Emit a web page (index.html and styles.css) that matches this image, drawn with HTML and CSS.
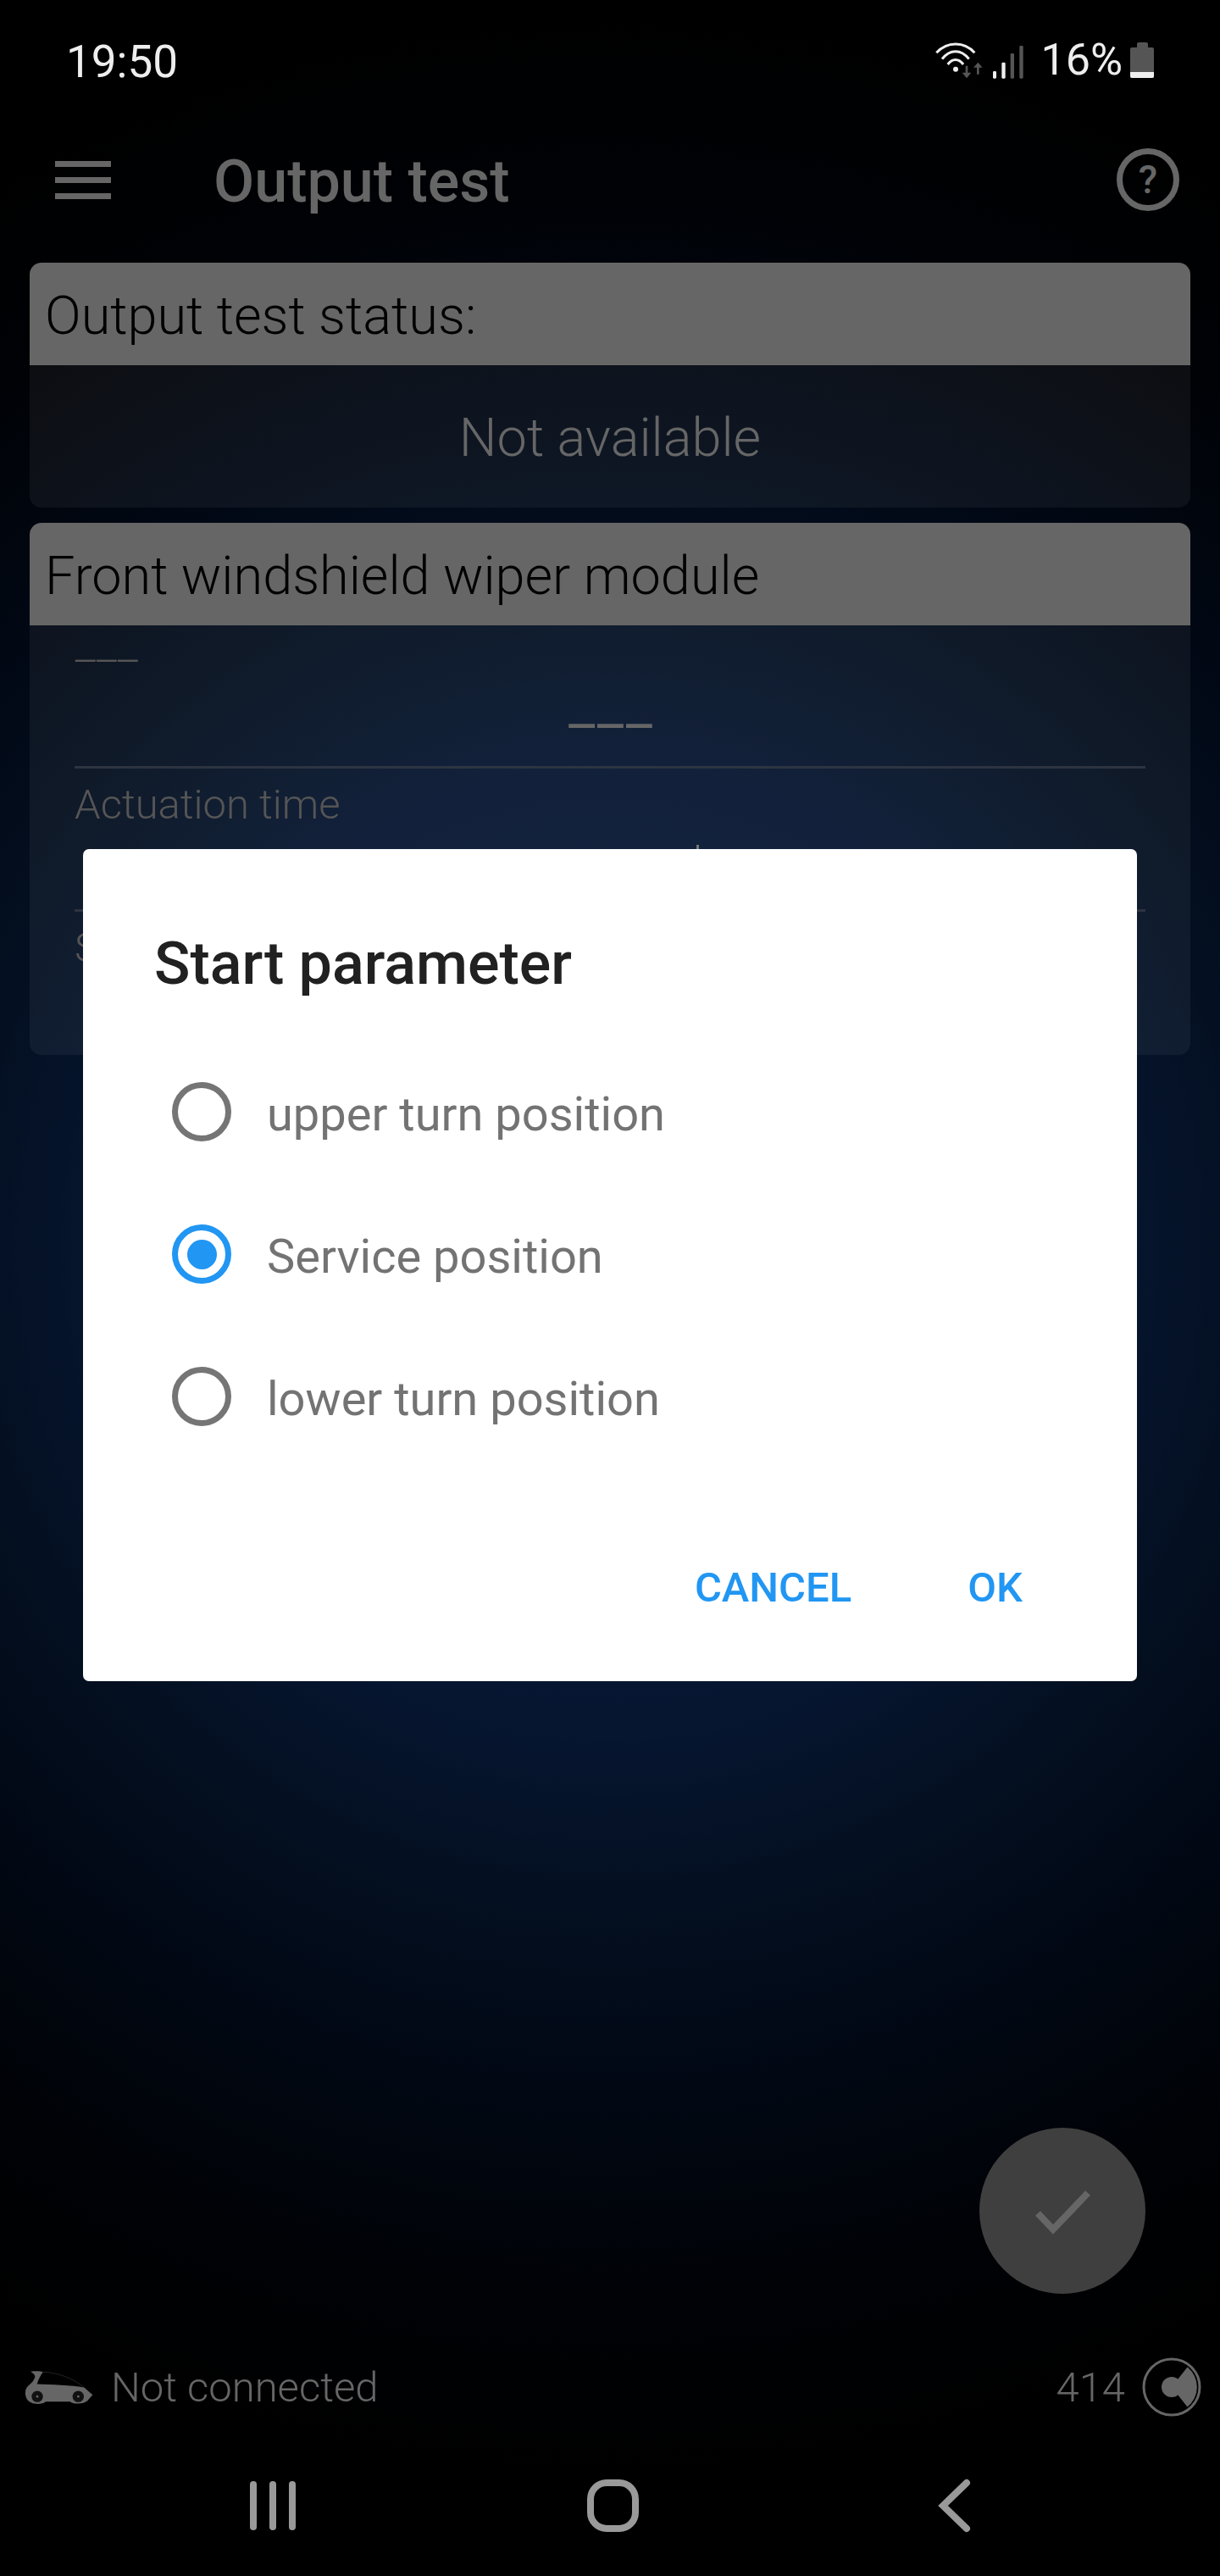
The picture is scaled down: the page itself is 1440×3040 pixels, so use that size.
FILE: index.html
```html
<!DOCTYPE html>
<html lang="en">
<head>
<meta charset="UTF-8" />
<meta name="viewport" content="width=device-width, initial-scale=1" />
<title>Output test</title>
<link rel="stylesheet" href="styles.css">
</head>
<body>
  <div class="screen">
    <div class="status-bar">
      <span class="clock">19:50</span>
      <div class="status-icons">
        <svg class="net-icon" viewBox="40 50 330 135">
          <g fill="none" stroke="#eee" stroke-width="9" stroke-linecap="butt">
            <path d="M50 90C88 49 148 49 185 90" />
            <path d="M70 112C97 76 138 76 165 112" />
            <path d="M90 131C106 109 129 109 145 131" />
          </g>
          <circle cx="118" cy="148" r="9" fill="#eee" />
          <g fill="#555">
            <path d="M153 136h8v24h12l-16 20-16-20h12z" />
            <path d="M193 166h8v-24h12l-16-18-16 18h12z" />
          </g>
          <rect x="250" y="155" width="12" height="26" rx="4" fill="#eee" />
          <rect x="281" y="124" width="13" height="57" rx="4" fill="#eee" />
          <rect x="312" y="92" width="13" height="89" rx="4" fill="#555" />
          <rect x="344" y="65" width="13" height="116" rx="4" fill="#555" />
        </svg>
        <span class="battery-text">16%</span>
        <div class="battery">
          <div class="battery-cap"></div>
          <div class="battery-body"><div class="battery-level"></div></div>
        </div>
      </div>
    </div>

    <div class="toolbar">
      <div class="menu-icon"><span></span><span></span><span></span></div>
      <h1 class="page-title">Output test</h1>
      <svg class="help-icon" viewBox="0 0 74 74">
        <circle cx="37" cy="37" r="33.5" fill="none" stroke="#666" stroke-width="7" />
        <text x="37" y="53" text-anchor="middle" class="help-mark">?</text>
      </svg>
    </div>

    <section class="card">
      <div class="card-header">Output test status:</div>
      <div class="card-body status-value">Not available</div>
    </section>

    <section class="card">
      <div class="card-header">Front windshield wiper module</div>
      <div class="card-body">
        <div class="field">
          <div class="field-label field-dashes">–––</div>
          <div class="field-value">–––</div>
        </div>
        <div class="field">
          <div class="field-label">Actuation time</div>
          <div class="field-value"><span class="value-tick"></span></div>
        </div>
        <div class="field">
          <div class="field-label">S</div>
        </div>
      </div>
    </section>

    <div class="bottom-status">
      <div class="connection">
        <svg class="car-icon" viewBox="85 165 243 122">
          <path fill="#666" d="M106 170C122 168 140 168 150 171C142 182 134 198 129 214C180 216 250 218 296 226L326 252L310 270C302 284 258 288 246 276H160C146 288 106 288 94 268C84 250 86 232 98 220C110 210 120 200 122 186C120 178 112 174 106 170Z" />
          <path d="M150 171C200 172 260 195 296 226" fill="none" stroke="#333" stroke-width="2" />
          <circle cx="130" cy="258" r="20" fill="#111" />
          <circle cx="275" cy="258" r="20" fill="#111" />
          <circle cx="130" cy="258" r="4" fill="#666" />
          <circle cx="275" cy="258" r="4" fill="#666" />
        </svg>
        <span class="bottom-text">Not connected</span>
      </div>
      <div class="counter">
        <span class="bottom-text">414</span>
        <svg class="credit-icon" viewBox="0 0 70 70">
          <circle cx="35" cy="35" r="33" fill="none" stroke="#666" stroke-width="3" />
          <path fill="#666" d="M35 35L53.5 11.5A30 30 0 0 1 53.5 58.500Z" />
          <circle cx="35" cy="35" r="12" fill="#666" />
        </svg>
      </div>
    </div>

    <div class="nav-bar">
      <svg class="nav-icon" width="56" height="60" viewBox="0 0 56 60">
        <g fill="#999">
          <rect x="1" y="1" width="8" height="58" rx="4" />
          <rect x="24" y="1" width="8" height="58" rx="4" />
          <rect x="47" y="1" width="8" height="58" rx="4" />
        </g>
      </svg>
      <svg class="nav-icon" width="62" height="62" viewBox="0 0 62 62">
        <rect x="4" y="4" width="53" height="54" rx="19" fill="none" stroke="#999" stroke-width="8" />
      </svg>
      <svg class="nav-icon" width="44" height="64" viewBox="0 0 44 64">
        <path d="M37 5L9 32L37 59" fill="none" stroke="#999" stroke-width="8" stroke-linecap="round" stroke-linejoin="miter" />
      </svg>
    </div>
  </div>

  <button class="fab" type="button">
    <svg width="72" height="56" viewBox="0 0 72 56">
      <path d="M7 31L25 50L66 7" fill="none" stroke="#666" stroke-width="8" />
    </svg>
  </button>

  <div class="dialog">
    <h2 class="dialog-title">Start parameter</h2>
    <div class="option"><span class="radio"></span><span class="option-label">upper turn position</span></div>
    <div class="option"><span class="radio radio-on"></span><span class="option-label">Service position</span></div>
    <div class="option"><span class="radio"></span><span class="option-label">lower turn position</span></div>
    <div class="dialog-actions">
      <span class="action">CANCEL</span>
      <span class="action">OK</span>
    </div>
  </div>
</body>
</html>
```

FILE: styles.css
```css
* {
  box-sizing: border-box;
}
body {
  margin: 0;
  width: 1440px;
  height: 3040px;
  position: relative;
  overflow: hidden;
  font-family: Roboto, sans-serif;
  background: #000;
}
.screen {
  height: 3040px;
  display: flex;
  flex-direction: column;
  background: radial-gradient(circle 1450px at 720px 1470px, #081c40 0%, #061530 40%, #041022 52%, #020a18 64%, #000206 85%, #000 100%);
}

/* Status bar */
.status-bar {
  height: 142px;
  display: flex;
  justify-content: space-between;
  align-items: center;
  padding: 0 78px 0 78px;
  color: #eee;
  flex-shrink: 0;
}
.clock {
  margin-top: 4px;
  font-size: 53px;
  line-height: 60px;
}
.status-icons {
  display: flex;
  align-items: center;
}
.net-icon {
  width: 110px;
  height: 45px;
}
.battery-text {
  font-size: 52px;
  line-height: 60px;
  margin-left: 16px;
}
.battery {
  margin-left: 9px;
  width: 28px;
  height: 42px;
  display: flex;
  flex-direction: column;
  align-items: center;
}
.battery-cap {
  width: 13px;
  height: 6px;
  background: #555;
  border-radius: 2px 2px 0 0;
}
.battery-body {
  width: 28px;
  height: 36px;
  background: #555;
  border-radius: 2px;
  display: flex;
  align-items: flex-end;
}
.battery-level {
  width: 100%;
  height: 7px;
  background: #eee;
  border-radius: 0 0 2px 2px;
}

/* Toolbar */
.toolbar {
  height: 140px;
  margin-bottom: 28px;
  display: flex;
  align-items: center;
  padding: 0 48px 0 65px;
  flex-shrink: 0;
}
.menu-icon {
  width: 66px;
  height: 45px;
  display: flex;
  flex-direction: column;
  justify-content: space-between;
}
.menu-icon span {
  height: 7px;
  background: #666;
}
.page-title {
  margin: 4px 0 0 121px;
  flex: 1;
  font-size: 70px;
  font-weight: 500;
  color: #666;
}
.help-icon {
  width: 74px;
  height: 74px;
}
.help-mark {
  font-family: Roboto, sans-serif;
  font-size: 46px;
  font-weight: 500;
  fill: #666;
}

/* Cards */
.card {
  margin: 0 35px 18px;
  border-radius: 14px;
  overflow: hidden;
  flex-shrink: 0;
}
.card-header {
  height: 121px;
  padding-left: 18px;
  background: #666;
  color: #000;
  font-size: 63px;
  font-weight: 300;
  line-height: 125px;
}
.card-body {
  background: rgba(255, 255, 255, 0.05);
}
.status-value {
  height: 168px;
  color: #666;
  font-size: 63px;
  font-weight: 300;
  line-height: 172px;
  text-align: center;
}
.field {
  height: 169px;
  margin: 0 53px;
  border-bottom: 3px solid #2d3441;
}
.field:last-child {
  border-bottom: none;
}
.field-label {
  height: 84px;
  color: #555;
  font-size: 49px;
  font-weight: 300;
  line-height: 85px;
}
.field-dashes {
  margin-left: -3px;
  letter-spacing: -0.14em;
}
.field-value {
  height: 82px;
  position: relative;
  padding-right: 6px;
  color: #666;
  font-size: 63px;
  line-height: 72px;
  letter-spacing: -0.12em;
  text-align: center;
}
.value-tick {
  position: absolute;
  left: 734px;
  top: 6px;
  width: 3px;
  height: 6px;
  background: #777;
}

/* Bottom status line */
.bottom-status {
  margin-top: auto;
  height: 84px;
  margin-bottom: 15px;
  padding: 0 22px 0 29px;
  display: flex;
  justify-content: space-between;
  align-items: center;
  flex-shrink: 0;
}
.connection,
.counter {
  display: flex;
  align-items: center;
}
.car-icon {
  width: 81px;
  height: 41px;
  margin-right: 21px;
}
.bottom-text {
  color: #666;
  font-size: 49px;
  font-weight: 300;
}
.credit-icon {
  width: 70px;
  height: 70px;
  margin-left: 20px;
}

/* Nav bar */
.nav-bar {
  height: 166px;
  padding-left: 121px;
  display: grid;
  grid-template-columns: repeat(3, 402px);
  justify-items: center;
  align-items: center;
  flex-shrink: 0;
}

/* Floating button */
.fab {
  position: absolute;
  left: 1156px;
  top: 2511px;
  width: 196px;
  height: 196px;
  border: none;
  border-radius: 50%;
  background: #3f3f3f;
  display: flex;
  justify-content: center;
  align-items: center;
  padding: 0;
}

/* Dialog */
.dialog {
  position: absolute;
  left: 98px;
  top: 1002px;
  width: 1244px;
  height: 982px;
  background: #fff;
  border-radius: 7px;
}
.dialog-title {
  height: 226px;
  margin: 0;
  padding: 94px 0 0 84px;
  color: #212121;
  font-size: 70px;
  font-weight: 500;
  line-height: 82px;
}
.option {
  height: 168px;
  display: flex;
  align-items: center;
  padding-left: 105px;
  color: #737373;
  font-size: 56px;
}
.option-label {
  margin-top: 5px;
  margin-left: -1px;
}
.radio {
  width: 70px;
  height: 70px;
  margin-right: 43px;
  border: 7px solid #757575;
  border-radius: 50%;
  display: flex;
  justify-content: center;
  align-items: center;
}
.radio-on {
  border-color: #2196f3;
}
.radio-on::after {
  content: "";
  width: 35px;
  height: 35px;
  border-radius: 50%;
  background: #2196f3;
}
.dialog-actions {
  height: 252px;
  padding: 30px 135px 0 0;
  display: flex;
  justify-content: flex-end;
  align-items: center;
  gap: 137px;
}
.action {
  color: #2196f3;
  font-size: 49px;
  font-weight: 500;
}
```
